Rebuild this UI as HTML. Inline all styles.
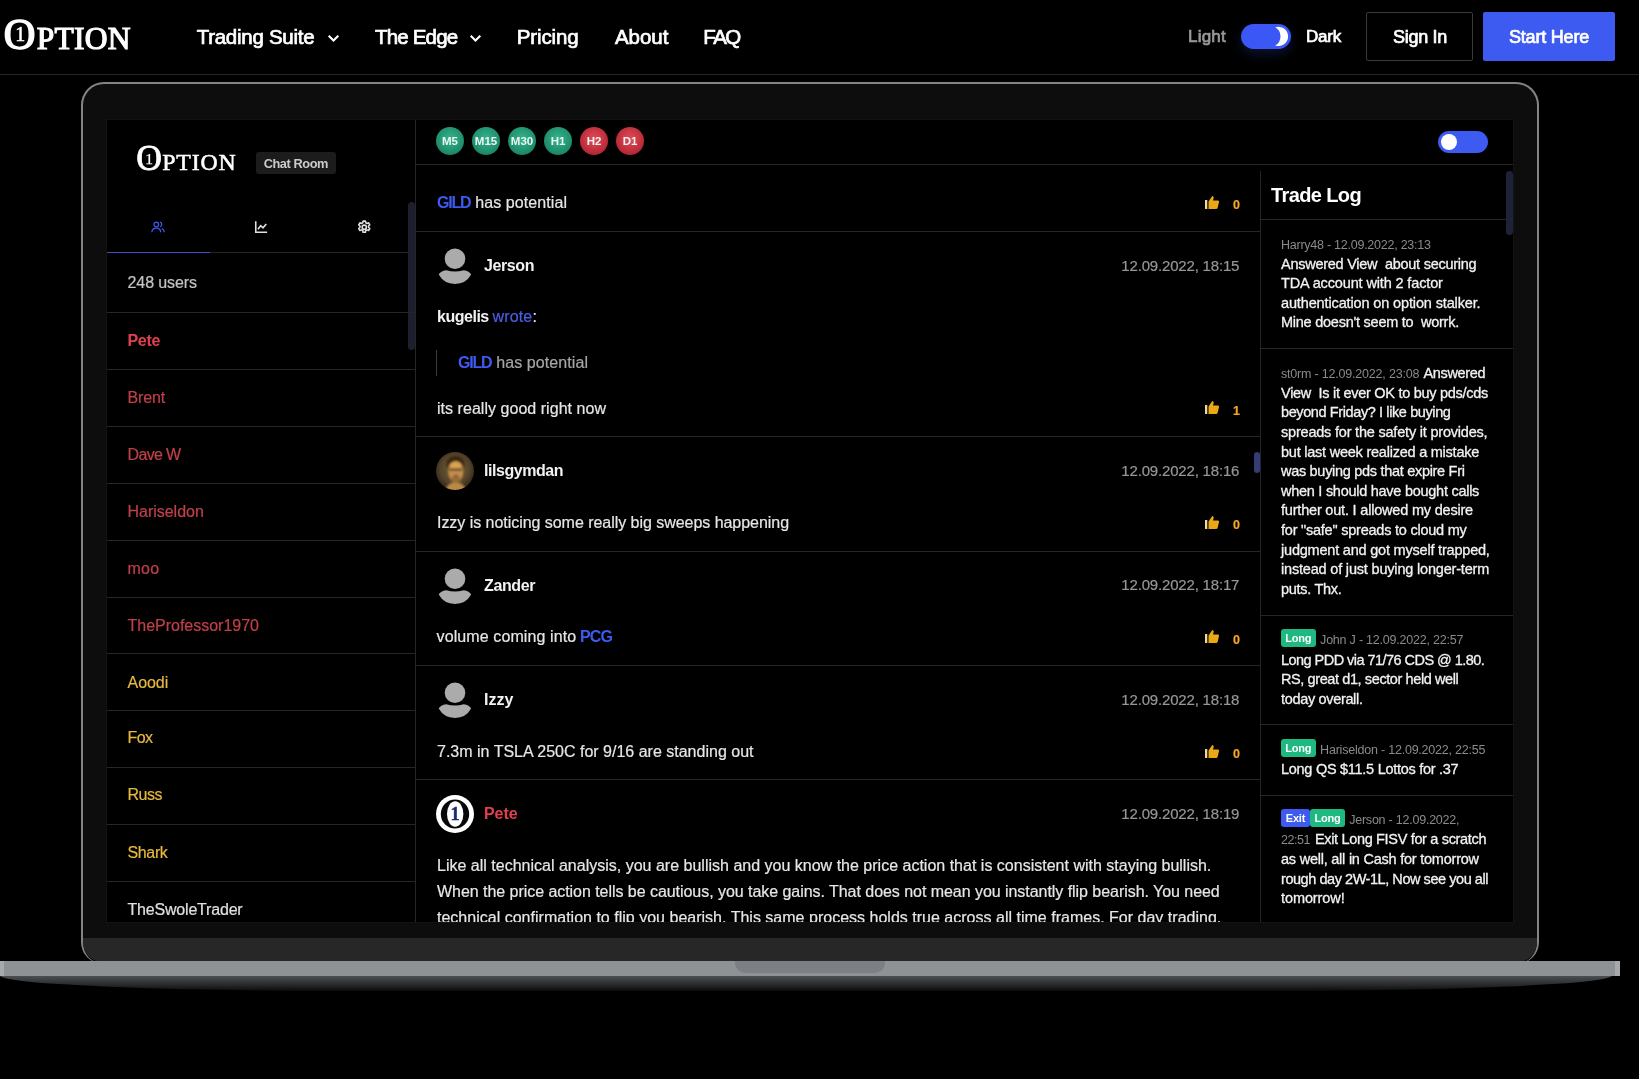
<!DOCTYPE html>
<html lang="en">
<head>
<meta charset="utf-8">
<title>1Option - Chat Room</title>
<style>
*{box-sizing:border-box;margin:0;padding:0}
html,body{width:1639px;height:1079px;overflow:hidden;background:#000}
body{position:relative;will-change:transform;font-family:"Liberation Sans",Arial,sans-serif;color:#e6e6e6;font-size:16px}
.a{position:absolute;white-space:nowrap}
.t{position:absolute;white-space:nowrap;line-height:20px;height:20px;-webkit-text-stroke:.2px currentColor}
.t.b{-webkit-text-stroke:0}
.t.m{-webkit-text-stroke:.7px currentColor}
.serif{font-family:"Liberation Serif","Times New Roman",serif}
.b{font-weight:bold}
.m{-webkit-text-stroke:0.7px currentColor}
/* header */
#hdr{position:absolute;left:0;top:0;width:1639px;height:75px;border-bottom:1px solid #262626;background:#000}
.nav{font-size:20.5px;color:#fff;line-height:24px;height:24px}
.chev{position:absolute;width:13px;height:9px}
/* laptop */
#frame{position:absolute;left:81px;top:82px;width:1458px;height:882px;border:2.8px solid #828588;border-bottom:none;border-radius:23px 23px 22px 22px;background:#0d0d0d}
#chin{position:absolute;left:83px;top:938px;width:1454px;height:24px;background:#272727;border-radius:0 0 20px 20px}
#base{position:absolute;left:0;top:961px;width:1620px;height:15px;background:linear-gradient(90deg,#a6aaad 0,#a6aaad 4px,#8e9295 4px,#8e9295 1615px,#a6aaad 1615px)}
#baseshadow{position:absolute;left:0;top:975px;width:1612px;height:15.5px;border-radius:0 0 350px 350px/0 0 15.5px 15.5px;background:linear-gradient(#4b4e51 8%,#2c2e30 55%,#0b0b0b)}
#notch{position:absolute;left:735px;top:961px;width:150px;height:11.5px;border-radius:0 0 10px 10px;background:#7c8084}
#screen{position:absolute;left:107px;top:120px;width:1406px;height:802px;background:#000;overflow:hidden;outline:1px solid #131313}
/* screen internals use page coordinates through #screen offset */
#screen .in{position:absolute;left:-107px;top:-120px;width:1639px;height:1079px}
.hl{position:absolute;height:1px;background:#262626}
.vl{position:absolute;width:1px;background:#262626}
.u{font-size:16px}
.red{color:#c0404a}.yel{color:#e6b93f}
.blue{color:#3d5af1}
.ts{color:#979797;font-size:15px}
.av{position:absolute;width:38px;height:38px}
.tf{position:absolute;width:28px;height:28px;border-radius:50%;color:#eaf6f2;font-size:11.5px;font-weight:bold;text-align:center;line-height:28px}
.g{background:radial-gradient(circle at 50% 42%,#36b28d,#1f8f6c 62%,#14664d)}
.r{background:radial-gradient(circle at 50% 42%,#e24b59,#bd2c3a 62%,#8a1e29)}
.like{position:absolute;width:16px;height:15px}
.cnt{color:#f5a623;font-size:12.5px;font-weight:bold}
.tl{position:absolute;white-space:nowrap;font-size:14.5px;line-height:20px;height:20px;color:#f2f2f2;-webkit-text-stroke:.3px currentColor}
.tl.mt{color:#8a8a8a;font-size:12.5px;-webkit-text-stroke:0}
.bd{position:absolute;height:18px;line-height:18px;font-size:11px;font-weight:bold;color:#fff;border-radius:3px;text-align:center;letter-spacing:-.2px}
.bd.lg{background:#1eb980}.bd.ex{background:#3d5af1}
</style>
</head>
<body>
<div id="hdr"></div>
<div id="frame"></div>
<div id="chin"></div>
<div id="baseshadow"></div>
<div id="base"></div>
<div id="notch"></div>
<div id="screen"><div class="in">
<!--SCREEN-->
<!-- sidebar -->
<div class="vl" style="left:415px;top:120px;height:802px"></div>
<div class="a serif" style="left:136.200px;top:137.300px;font-size:35.500px;line-height:42px;color:#fff;-webkit-text-stroke:.8px #fff">O</div>
<div class="a serif" style="left:143.500px;top:149px;font-size:15.500px;line-height:20px;color:#fff;width:11px;text-align:center;-webkit-text-stroke:.25px #fff">1</div>
<div class="a serif" style="letter-spacing:0.824px;left:162.300px;top:141.800px;font-size:23.800px;line-height:40px;color:#fff;-webkit-text-stroke:.55px #fff">PTION</div>
<div class="a" style="left:256px;top:152px;width:80px;height:22px;background:#1c1c1c;border-radius:3px"></div>
<div class="t b" style="letter-spacing:-0.439px;left:263.7px;top:153.5px;font-size:12.8px;color:#cbcbcb">Chat Room</div>
<!-- tabs -->
<div class="hl" style="left:107px;top:252px;width:308px"></div>
<div class="a" style="left:107px;top:252px;width:103px;height:1px;background:#3c50c8"></div>
<svg class="a" style="left:151px;top:220px;width:14px;height:14px" viewBox="0 0 16 16" fill="none" stroke="#3d5af1" stroke-width="1.4"><circle cx="6" cy="5" r="2.7"/><path d="M1 14c0-3 2.2-4.8 5-4.8s5 1.800 5 4.800"/><path d="M10.300 2.500a2.700 2.700 0 0 1 0 5.200M12.300 9.700c1.700.7 2.700 2.200 2.700 4.300"/></svg>
<svg class="a" style="left:254px;top:220px;width:14px;height:14px" viewBox="0 0 16 16" fill="none" stroke="#e0e0e0" stroke-width="1.800"><path d="M2 1.500v12.500h13"/><path d="M4.500 10.500l3.200-4 2.600 2.400 3.700-4.400"/></svg>
<svg class="a" style="left:356.500px;top:219.500px;width:14.500px;height:14.500px" viewBox="0 0 16 16" fill="none" stroke="#e0e0e0" stroke-width="1.750"><circle cx="8" cy="8" r="2.300"/><path d="M6.700 1.200h2.600l.4 1.900 1.300.7 1.800-.7 1.300 2.200-1.400 1.300v1.500l1.400 1.300-1.300 2.200-1.800-.700-1.300.700-.4 1.900h-2.600l-.4-1.900-1.300-.7-1.800.7-1.300-2.200 1.400-1.300v-1.500l-1.400-1.300 1.300-2.200 1.800.7 1.300-.7z" stroke-linejoin="round"/></svg>
<div class="a" style="left:407.500px;top:202px;width:7px;height:148px;border-radius:4px;background:#1d1f2e"></div>
<div class="t u" style="letter-spacing:-0.085px;left:127.500px;top:273px;color:#c4c4c4">248 users</div>
<div class="hl" style="left:107px;top:312.0px;width:308px"></div>
<div class="hl" style="left:107px;top:368.9px;width:308px"></div>
<div class="hl" style="left:107px;top:425.8px;width:308px"></div>
<div class="hl" style="left:107px;top:482.7px;width:308px"></div>
<div class="hl" style="left:107px;top:539.6px;width:308px"></div>
<div class="hl" style="left:107px;top:596.5px;width:308px"></div>
<div class="hl" style="left:107px;top:653.4px;width:308px"></div>
<div class="hl" style="left:107px;top:710.3px;width:308px"></div>
<div class="hl" style="left:107px;top:767.2px;width:308px"></div>
<div class="hl" style="left:107px;top:824.1px;width:308px"></div>
<div class="hl" style="left:107px;top:881.0px;width:308px"></div>
<div class="t u red b" style="letter-spacing:-0.324px;left:127.500px;top:331.0px;color:#e2404f">Pete</div>
<div class="t u red" style="letter-spacing:-0.150px;left:127.500px;top:388.0px">Brent</div>
<div class="t u red" style="letter-spacing:-0.651px;left:127.500px;top:445.0px">Dave W</div>
<div class="t u red" style="letter-spacing:-0.023px;left:127.500px;top:502.0px">Hariseldon</div>
<div class="t u red" style="letter-spacing:0.292px;left:127.500px;top:559.0px">moo</div>
<div class="t u red" style="letter-spacing:-0.009px;left:127.500px;top:616.0px">TheProfessor1970</div>
<div class="t u yel" style="letter-spacing:-0.034px;left:127.500px;top:673.0px">Aoodi</div>
<div class="t u yel" style="letter-spacing:-0.557px;left:127.500px;top:728.3px">Fox</div>
<div class="t u yel" style="letter-spacing:-0.488px;left:127.500px;top:785.3px">Russ</div>
<div class="t u yel" style="letter-spacing:-0.359px;left:127.500px;top:843.0px">Shark</div>
<div class="t u " style="letter-spacing:-0.192px;left:127.500px;top:900.0px;color:#e0e0e0">TheSwoleTrader</div>

<!-- toolbar -->
<div class="hl" style="left:416px;top:164px;width:1097px"></div>
<div class="tf g" style="left:436px;top:127px">M5</div>
<div class="tf g" style="left:472px;top:127px">M15</div>
<div class="tf g" style="left:508px;top:127px">M30</div>
<div class="tf g" style="left:544px;top:127px">H1</div>
<div class="tf r" style="left:580px;top:127px">H2</div>
<div class="tf r" style="left:616px;top:127px">D1</div>
<div class="a" style="left:1438px;top:131px;width:50px;height:22px;border-radius:11px;background:#3d5af1"></div>
<div class="a" style="left:1440.7px;top:133.7px;width:16.6px;height:16.6px;border-radius:50%;background:#fff"></div>
<!-- chat -->
<div class="vl" style="left:1260px;top:171px;height:751px"></div>
<div class="a" style="left:1253.5px;top:452px;width:6.5px;height:21px;border-radius:3px;background:#343d74"></div>
<div class="t blue b" style="letter-spacing:-1.230px;left:437px;top:192.500px">GILD</div><div class="t" style="letter-spacing:0.090px;left:475.200px;top:192.500px">has potential</div>
<svg class="like" style="left:1204.7px;top:195.5px;width:14px;height:13px" viewBox="0 0 14 13"><rect x="0" y="4" width="2.300" height="9" fill="#f6d890"/><path d="M3.500 13V5.500L7.300 0Q9 .2 8.600 2.200L8 4.500H13Q14.200 4.600 14 6L12.600 12Q12.300 13 11 13Z" fill="#eaa914"/></svg>
<div class="t cnt" style="left:1232.5px;top:195.2px;width:8px;text-align:center">0</div>
<div class="hl" style="left:416px;top:231.0px;width:844px"></div>
<svg class="av" style="left:436px;top:246.0px" viewBox="0 0 38 38"><circle cx="19" cy="12.700" r="10.300" fill="#ababab"/><path d="M2.700 28.600Q4.500 25 10.200 24.200Q19 26.600 27.700 24.200Q33.500 25 35.100 28.600Q30 38 19 38Q8 38 2.700 28.600Z" fill="#ababab"/></svg>
<div class="t b" style="letter-spacing:-0.411px;left:484px;top:256.0px;color:#f2f2f2">Jerson</div>
<div class="t ts" style="letter-spacing:-0.174px;left:1121.3px;top:255.5px">12.09.2022, 18:15</div>
<div class="t b" style="letter-spacing:-0.477px;left:437px;top:306.500px;color:#f2f2f2">kugelis</div><div class="t" style="letter-spacing:0.154px;left:492.500px;top:306.500px"><span style="color:#4a5fe6">wrote</span>:</div>
<div class="vl" style="left:436px;top:350px;height:26px;background:#3a3a3a"></div>
<div class="t blue b" style="letter-spacing:-1.230px;left:458px;top:352.500px">GILD</div><div class="t" style="letter-spacing:0.090px;left:496.200px;top:352.500px;color:#a6a6a6">has potential</div>
<div class="t" style="letter-spacing:0.036px;left:437px;top:398.500px">its really good right now</div>
<svg class="like" style="left:1204.7px;top:401.0px;width:14px;height:13px" viewBox="0 0 14 13"><rect x="0" y="4" width="2.300" height="9" fill="#f6d890"/><path d="M3.500 13V5.500L7.300 0Q9 .2 8.600 2.200L8 4.500H13Q14.200 4.600 14 6L12.600 12Q12.300 13 11 13Z" fill="#eaa914"/></svg>
<div class="t cnt" style="left:1232.5px;top:400.7px;width:8px;text-align:center">1</div>
<div class="hl" style="left:416px;top:436.0px;width:844px"></div>
<svg class="av" style="left:436px;top:452px" viewBox="0 0 38 38"><defs><clipPath id="pc"><circle cx="19" cy="19" r="19"/></clipPath><filter id="pb" x="-20%" y="-20%" width="140%" height="140%"><feGaussianBlur stdDeviation="1.1"/></filter><radialGradient id="pg" cx="50%" cy="45%" r="55%"><stop offset="0" stop-color="#75603a"/><stop offset=".7" stop-color="#54442a"/><stop offset="1" stop-color="#33261a"/></radialGradient></defs><g clip-path="url(#pc)"><rect width="38" height="38" fill="url(#pg)"/><g filter="url(#pb)"><path d="M9 40Q10 31 19.500 30Q29 31 31 40Z" fill="#b98a45"/><ellipse cx="19.500" cy="12" rx="9" ry="8" fill="#3a2510"/><ellipse cx="19.800" cy="19.500" rx="7.600" ry="10.500" fill="#c48f4c"/><ellipse cx="19.500" cy="13.500" rx="6" ry="3.500" fill="#d9a352"/><rect x="13.500" y="16.500" width="12.500" height="2.200" fill="#5a452a"/><ellipse cx="19.800" cy="27.500" rx="5.500" ry="3" fill="#9a6a38"/><ellipse cx="20" cy="23.800" rx="3" ry="1" fill="#8a4f30"/></g></g></svg>
<div class="t b" style="letter-spacing:-0.458px;left:484px;top:461.0px;color:#f2f2f2">lilsgymdan</div>
<div class="t ts" style="letter-spacing:-0.174px;left:1121.3px;top:460.5px">12.09.2022, 18:16</div>
<div class="t" style="letter-spacing:-0.040px;left:437px;top:512.500px">Izzy is noticing some really big sweeps happening</div>
<svg class="like" style="left:1204.7px;top:515.5px;width:14px;height:13px" viewBox="0 0 14 13"><rect x="0" y="4" width="2.300" height="9" fill="#f6d890"/><path d="M3.500 13V5.500L7.300 0Q9 .2 8.600 2.200L8 4.500H13Q14.200 4.600 14 6L12.600 12Q12.300 13 11 13Z" fill="#eaa914"/></svg>
<div class="t cnt" style="left:1232.5px;top:515.2px;width:8px;text-align:center">0</div>
<div class="hl" style="left:416px;top:551.0px;width:844px"></div>
<svg class="av" style="left:436px;top:566.0px" viewBox="0 0 38 38"><circle cx="19" cy="12.700" r="10.300" fill="#ababab"/><path d="M2.700 28.600Q4.500 25 10.200 24.200Q19 26.600 27.700 24.200Q33.500 25 35.100 28.600Q30 38 19 38Q8 38 2.700 28.600Z" fill="#ababab"/></svg>
<div class="t b" style="letter-spacing:-0.391px;left:484px;top:576.0px;color:#f2f2f2">Zander</div>
<div class="t ts" style="letter-spacing:-0.174px;left:1121.3px;top:575.0px">12.09.2022, 18:17</div>
<div class="t" style="letter-spacing:0.103px;left:436.600px;top:626.500px">volume coming into</div><div class="t blue b" style="letter-spacing:-0.891px;left:580px;top:626.500px">PCG</div>
<svg class="like" style="left:1204.7px;top:630.0px;width:14px;height:13px" viewBox="0 0 14 13"><rect x="0" y="4" width="2.300" height="9" fill="#f6d890"/><path d="M3.500 13V5.500L7.300 0Q9 .2 8.600 2.200L8 4.500H13Q14.200 4.600 14 6L12.600 12Q12.300 13 11 13Z" fill="#eaa914"/></svg>
<div class="t cnt" style="left:1232.5px;top:629.7px;width:8px;text-align:center">0</div>
<div class="hl" style="left:416px;top:665.0px;width:844px"></div>
<svg class="av" style="left:436px;top:680.0px" viewBox="0 0 38 38"><circle cx="19" cy="12.700" r="10.300" fill="#ababab"/><path d="M2.700 28.600Q4.500 25 10.200 24.200Q19 26.600 27.700 24.200Q33.500 25 35.100 28.600Q30 38 19 38Q8 38 2.700 28.600Z" fill="#ababab"/></svg>
<div class="t b" style="letter-spacing:0.039px;left:484px;top:690.0px;color:#f2f2f2">Izzy</div>
<div class="t ts" style="letter-spacing:-0.174px;left:1121.3px;top:689.5px">12.09.2022, 18:18</div>
<div class="t" style="letter-spacing:0.003px;left:437px;top:741.500px">7.3m in TSLA 250C for 9/16 are standing out</div>
<svg class="like" style="left:1204.7px;top:744.5px;width:14px;height:13px" viewBox="0 0 14 13"><rect x="0" y="4" width="2.300" height="9" fill="#f6d890"/><path d="M3.500 13V5.500L7.300 0Q9 .2 8.600 2.200L8 4.500H13Q14.200 4.600 14 6L12.600 12Q12.300 13 11 13Z" fill="#eaa914"/></svg>
<div class="t cnt" style="left:1232.5px;top:744.2px;width:8px;text-align:center">0</div>
<div class="hl" style="left:416px;top:779.0px;width:844px"></div>
<svg class="av" style="left:436px;top:795px" viewBox="0 0 38 38"><circle cx="19" cy="19" r="19" fill="#fff"/><ellipse cx="19" cy="19" rx="14.200" ry="14.600" fill="#080808"/><ellipse cx="19.200" cy="19" rx="8.200" ry="12.800" fill="#fff"/><text x="19.200" y="25.200" text-anchor="middle" font-family="Liberation Serif,serif" font-weight="bold" font-size="18.500" fill="#1b2a6b" stroke="#1b2a6b" stroke-width=".4">1</text></svg>
<div class="t b" style="letter-spacing:-0.074px;left:484px;top:804.0px;color:#e2404f">Pete</div>
<div class="t ts" style="letter-spacing:-0.174px;left:1121.3px;top:803.5px">12.09.2022, 18:19</div>
<div class="t" style="letter-spacing:0.005px;left:437px;top:855.5px;color:#e6e6e6">Like all technical analysis, you are bullish and you know the price action that is consistent with staying bullish.</div>
<div class="t" style="letter-spacing:-0.045px;left:437px;top:881.7px;color:#e6e6e6">When the price action tells be cautious, you take gains. That does not mean you instantly flip bearish. You need</div>
<div class="t" style="letter-spacing:0.010px;left:437px;top:907.9px;color:#e6e6e6">technical confirmation to flip you bearish. This same process holds true across all time frames. For day trading,</div>

<!-- trade log -->
<div class="a" style="left:1506px;top:171px;width:7px;height:64px;border-radius:4px;background:#1d2238"></div>
<div class="t b" style="letter-spacing:-0.620px;left:1271px;top:185px;font-size:20px;color:#fff">Trade Log</div>
<div class="hl" style="left:1261px;top:219.0px;width:252px"></div>
<div class="tl mt" style="letter-spacing:-0.247px;left:1281.0px;top:234.7px">Harry48 - 12.09.2022, 23:13</div>
<div class="tl" style="letter-spacing:-0.257px;left:1281.0px;top:254.0px">Answered View &nbsp;about securing</div>
<div class="tl" style="letter-spacing:-0.137px;left:1281.0px;top:273.3px">TDA account with 2 factor</div>
<div class="tl" style="letter-spacing:-0.135px;left:1281.0px;top:292.8px">authentication on option stalker.</div>
<div class="tl" style="letter-spacing:-0.247px;left:1281.0px;top:312.3px">Mine doesn't seem to &nbsp;worrk.</div>
<div class="hl" style="left:1261px;top:348.0px;width:252px"></div>
<div class="tl mt" style="letter-spacing:-0.198px;left:1281.0px;top:363.6px">st0rm - 12.09.2022, 23:08</div>
<div class="tl" style="letter-spacing:-0.348px;left:1423.5px;top:363.2px">Answered</div>
<div class="tl" style="letter-spacing:-0.280px;left:1281.0px;top:382.8px">View &nbsp;Is it ever OK to buy pds/cds</div>
<div class="tl" style="letter-spacing:-0.395px;left:1281.0px;top:402.3px">beyond Friday? I like buying</div>
<div class="tl" style="letter-spacing:-0.205px;left:1281.0px;top:421.8px">spreads for the safety it provides,</div>
<div class="tl" style="letter-spacing:-0.232px;left:1281.0px;top:441.6px">but last week realized a mistake</div>
<div class="tl" style="letter-spacing:-0.301px;left:1281.0px;top:461.2px">was buying pds that expire Fri</div>
<div class="tl" style="letter-spacing:-0.267px;left:1281.0px;top:480.8px">when I should have bought calls</div>
<div class="tl" style="letter-spacing:-0.196px;left:1281.0px;top:500.3px">further out. I allowed my desire</div>
<div class="tl" style="letter-spacing:-0.228px;left:1281.0px;top:520.0px">for "safe" spreads to cloud my</div>
<div class="tl" style="letter-spacing:-0.204px;left:1281.0px;top:539.8px">judgment and got myself trapped,</div>
<div class="tl" style="letter-spacing:-0.185px;left:1281.0px;top:559.4px">instead of just buying longer-term</div>
<div class="tl" style="letter-spacing:-0.291px;left:1281.0px;top:579.2px">puts. Thx.</div>
<div class="hl" style="left:1261px;top:615.0px;width:252px"></div>
<div class="bd lg" style="left:1280.7px;top:629.0px;width:35.0px">Long</div>
<div class="tl mt" style="letter-spacing:-0.217px;left:1320.1px;top:630.2px">John J - 12.09.2022, 22:57</div>
<div class="tl" style="letter-spacing:-0.538px;left:1281.0px;top:649.6px">Long PDD via 71/76 CDS @ 1.80.</div>
<div class="tl" style="letter-spacing:-0.400px;left:1281.0px;top:669.0px">RS, great d1, sector held well</div>
<div class="tl" style="letter-spacing:-0.332px;left:1281.0px;top:688.5px">today overall.</div>
<div class="hl" style="left:1261px;top:724.0px;width:252px"></div>
<div class="bd lg" style="left:1280.7px;top:739.0px;width:35.0px">Long</div>
<div class="tl mt" style="letter-spacing:-0.215px;left:1320.1px;top:740.0px">Hariseldon - 12.09.2022, 22:55</div>
<div class="tl" style="letter-spacing:-0.276px;left:1281.0px;top:759.0px">Long QS $11.5 Lottos for .37</div>
<div class="hl" style="left:1261px;top:795.0px;width:252px"></div>
<div class="bd ex" style="left:1280.7px;top:809px;width:29.5px">Exit</div>
<div class="bd lg" style="left:1310.0px;top:809px;width:35.0px">Long</div>
<div class="tl mt" style="letter-spacing:-0.229px;left:1349.2px;top:810.0px">Jerson - 12.09.2022,</div>
<div class="tl mt" style="letter-spacing:-0.456px;left:1281.0px;top:829.6px">22:51</div>
<div class="tl" style="letter-spacing:-0.330px;left:1314.9px;top:829.2px">Exit Long FISV for a scratch</div>
<div class="tl" style="letter-spacing:-0.233px;left:1281.0px;top:849.0px">as well, all in Cash for tomorrow</div>
<div class="tl" style="letter-spacing:-0.450px;left:1281.0px;top:868.5px">rough day 2W-1L, Now see you all</div>
<div class="tl" style="letter-spacing:-0.097px;left:1281.0px;top:888.0px">tomorrow!</div>
</div></div>
<!--HEADER-->
<!-- logo -->
<div class="a serif" style="left:3.6px;top:6.5px;font-size:44.5px;line-height:54px;color:#fff;-webkit-text-stroke:1.3px #fff">O</div>
<div class="a serif" style="left:13.300px;top:21.500px;font-size:20px;line-height:24px;color:#fff;width:14px;text-align:center;-webkit-text-stroke:.5px #fff">1</div>
<div class="a serif" style="letter-spacing:0.290px;left:36.700px;top:18.600px;font-size:31.500px;line-height:40px;color:#fff;-webkit-text-stroke:1.2px #fff">PTION</div>
<!-- nav -->
<div class="t nav m" style="letter-spacing:-0.275px;left:196.7px;top:25px">Trading Suite</div>
<svg class="chev" style="left:326.5px;top:34px" viewBox="0 0 13 9"><path d="M1.7 1.7 L6.5 6.5 L11.3 1.7" fill="none" stroke="#fff" stroke-width="2.1"/></svg>
<div class="t nav m" style="letter-spacing:-0.826px;left:375px;top:25px">The Edge</div>
<svg class="chev" style="left:468.5px;top:34px" viewBox="0 0 13 9"><path d="M1.7 1.7 L6.5 6.5 L11.3 1.7" fill="none" stroke="#fff" stroke-width="2.1"/></svg>
<div class="t nav m" style="letter-spacing:-0.096px;left:516.7px;top:25px">Pricing</div>
<div class="t nav m" style="letter-spacing:-0.056px;left:615px;top:25px">About</div>
<div class="t nav m" style="letter-spacing:-1.505px;left:703.3px;top:25px">FAQ</div>
<!-- theme toggle -->
<div class="t m" style="letter-spacing:0.225px;left:1188px;top:27px;font-size:17px;color:#9a9a9a">Light</div>
<div class="a" style="left:1241px;top:24px;width:50px;height:25px;border-radius:13px;background:#3b58f6;box-shadow:0 5px 12px rgba(61,90,241,.2)"></div>
<svg class="a" style="left:1265px;top:24px;width:25px;height:25px" viewBox="0 0 25 25"><path d="M10.252 3.366A9.600 9.600 0 1 1 10.252 21.434A10.400 10.400 0 0 0 10.252 3.366Z" fill="#fff"/></svg>
<div class="t m" style="letter-spacing:-0.227px;left:1306px;top:27px;font-size:17px;color:#fff">Dark</div>
<div class="a" style="left:1366px;top:12px;width:107px;height:49px;border:1px solid #3a3a3a;border-radius:2px"></div>
<div class="t m" style="letter-spacing:-0.292px;left:1393px;top:26.5px;font-size:18px;color:#fff">Sign In</div>
<div class="a" style="left:1483px;top:12px;width:132px;height:49px;background:#3d5af1;border-radius:2px"></div>
<div class="t m" style="letter-spacing:-0.203px;left:1509px;top:26.5px;font-size:18px;color:#fff">Start Here</div>
<!--/HEADER-->
</body>
</html>
